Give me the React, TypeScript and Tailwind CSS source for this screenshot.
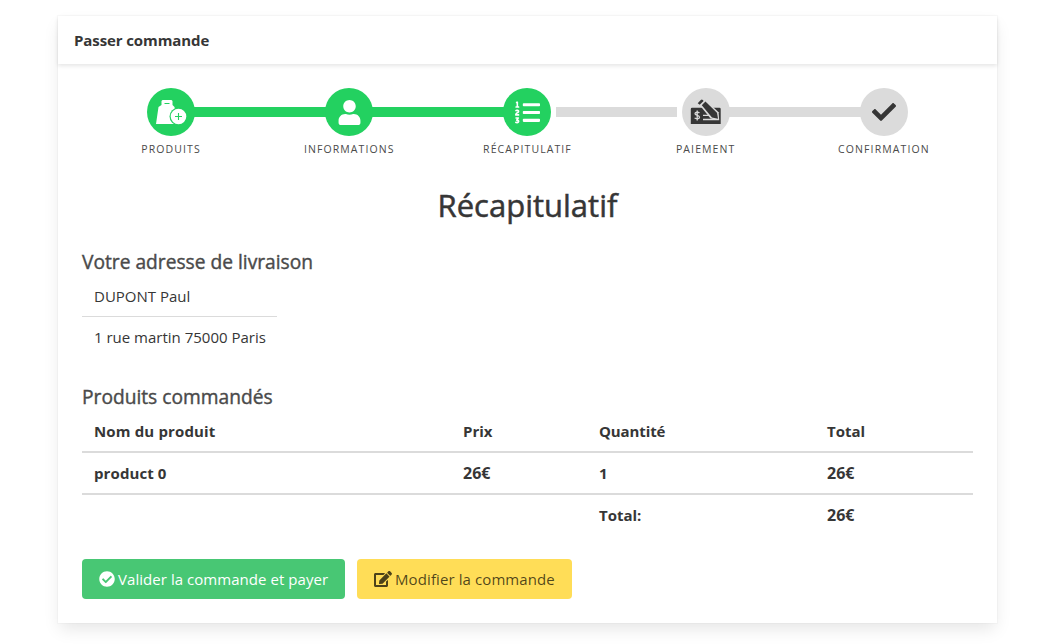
import React from "react";
import { FaCheck, FaCheckCircle, FaEdit, FaListOl, FaUser } from "react-icons/fa";

function BagIcon() {
  return (
    <svg width="32" height="28" viewBox="0 0 32 28" fill="none">
      <path d="M7.500 2h9l1 1v4l2 2 3 17H1L3.500 9l3-2V3z" fill="#fff" />
      <path d="M9.500 5.500h5" stroke="#23d160" strokeWidth="1" />
      <circle cx="23.500" cy="18.500" r="9" fill="#23d160" />
      <circle cx="23.500" cy="18.500" r="7.800" fill="#fff" />
      <path d="M20 18.500h7M23.500 15v7" stroke="#23d160" strokeWidth="1.100" />
    </svg>
  );
}

function ChequeIcon() {
  return (
    <svg width="32" height="28" viewBox="0 0 32 28" fill="none">
      <path d="M2 9.700h27.500q1.200 0 1.200 1.200V26H.8V10.900q0-1.200 1.200-1.200z" fill="#363636" />
      <path d="M13 17.300h6M13 21.500h15.500" stroke="#dbdbdb" strokeWidth="1.300" />
      <path d="M9.400 15C8.300 13.800 5 13.900 5 15.800c0 2.100 4.500 1.200 4.500 3.400 0 2.100-3.600 2-4.900.7M7.200 12.500v10" stroke="#dbdbdb" strokeWidth="1.300" />
      <path d="M10 7.500l5.500-5.500L28.600 14.300l.6 7.900-8.700-1.800z" fill="#dbdbdb" />
      <path d="M11.800 7.200l3.600-3.600L27 14.800l1 5.900-6-1.100z" fill="#363636" />
      <path d="M7.700 5.300l3.100-3.200q1-1 2 0l.8.8-3.900 3.900z" fill="#363636" />
    </svg>
  );
}

const steps = [
  { label: "Produits", icon: <BagIcon />, done: true, line: "bg-[#23d160]" },
  { label: "Informations", icon: <FaUser size={25} />, done: true, line: "bg-[#23d160]" },
  { label: "Récapitulatif", icon: <FaListOl size={25} />, done: true, line: "bg-[#dbdbdb] ml-[6px] mr-[6px]" },
  { label: "Paiement", icon: <ChequeIcon />, done: false, line: "bg-[#dbdbdb]" },
  { label: "Confirmation", icon: <FaCheck size={24} />, done: false, line: "" },
];

export default function App() {
  return (
    <main className="h-[644px] overflow-hidden bg-white pt-4 pl-[58px] font-['Open_Sans',sans-serif] text-[15px] leading-6 text-[#4a4a4a]">
      <section className="h-[607px] w-[939px] bg-white shadow-[0_8px_16px_-2px_rgba(10,10,10,0.1),0_0_0_1px_rgba(10,10,10,0.02)]">
        <header className="flex h-12 items-center px-4 font-bold text-[#363636] shadow-[0_2px_4px_rgba(10,10,10,0.1)]">
          <span className="tracking-[-0.1px]">Passer commande</span>
        </header>
        <div className="px-6 pt-6">
          <ol className="grid grid-cols-5">
            {steps.map((s) => (
              <li key={s.label} className="flex flex-col items-center">
                <div className="relative flex w-full justify-center">
                  <div className={`z-10 flex size-12 items-center justify-center rounded-full ${s.done ? "bg-[#23d160] text-white" : "bg-[#dbdbdb] text-[#363636]"}`}>
                    {s.icon}
                  </div>
                  {s.line && (
                    <div className="absolute top-[19px] left-[calc(50%+23px)] flex h-2.5 w-[calc(100%-46px)]">
                      <div className={`flex-1 ${s.line}`} />
                    </div>
                  )}
                </div>
                <span className="mt-[5px] text-[10.5px] leading-4 tracking-[1.1px] text-[#4a4a4a] uppercase">{s.label}</span>
              </li>
            ))}
          </ol>
          <h1 className="mt-[30px] text-center text-[31px] leading-9 text-[#363636] [-webkit-text-stroke:0.5px_#363636]">Récapitulatif</h1>
          <h2 className="mt-[26px] text-[19.2px] leading-[25px] [-webkit-text-stroke:0.4px_#4a4a4a]">Votre adresse de livraison</h2>
          <div className="mt-[2px] w-[195px] text-[#363636]">
            <p className="h-[41px] border-b border-[#dbdbdb] px-3 py-2"><span className="whitespace-nowrap">DUPONT Paul</span></p>
            <p className="h-10 px-3 py-2"><span className="whitespace-nowrap">1 rue martin 75000 Paris</span></p>
          </div>
          <h2 className="mt-[27px] text-[19.2px] leading-[25px] [-webkit-text-stroke:0.4px_#4a4a4a]">Produits commandés</h2>
          <table className="mt-[2px] w-full table-fixed border-collapse text-left font-bold text-[#363636]">
            <colgroup>
              <col className="w-[369px]" />
              <col className="w-[136px]" />
              <col className="w-[228px]" />
              <col className="w-[158px]" />
            </colgroup>
            <tbody>
              <tr className="h-[41px] border-b-2 border-[#dbdbdb] [&>th]:px-3">
                <th className="tracking-[0.15px]">Nom du produit</th><th>Prix</th><th className="tracking-[-0.1px]">Quantité</th><th>Total</th>
              </tr>
              <tr className="h-[42px] border-b-2 border-[#dbdbdb] [&>td]:px-3">
                <td className="tracking-[0.1px]">product 0</td><td className="text-base">26€</td><td>1</td><td className="text-base">26€</td>
              </tr>
              <tr className="h-10 [&>td]:px-3">
                <td /><td /><td>Total:</td><td className="text-base">26€</td>
              </tr>
            </tbody>
          </table>
          <div className="mt-[25px] flex gap-3">
            <button className="flex h-10 w-[263px] items-center rounded bg-[#48c774] pl-[17px] text-white">
              <FaCheckCircle size={16} className="mr-[3px]" />
              <span className="tracking-[0.05px] whitespace-nowrap">Valider la commande et payer</span>
            </button>
            <button className="flex h-10 w-[215px] items-center rounded bg-[#ffdd57] pl-[17px] text-black/70">
              <FaEdit size={18} className="mr-[3px]" />
              <span className="tracking-[0.1px] whitespace-nowrap">Modifier la commande</span>
            </button>
          </div>
        </div>
      </section>
    </main>
  );
}
